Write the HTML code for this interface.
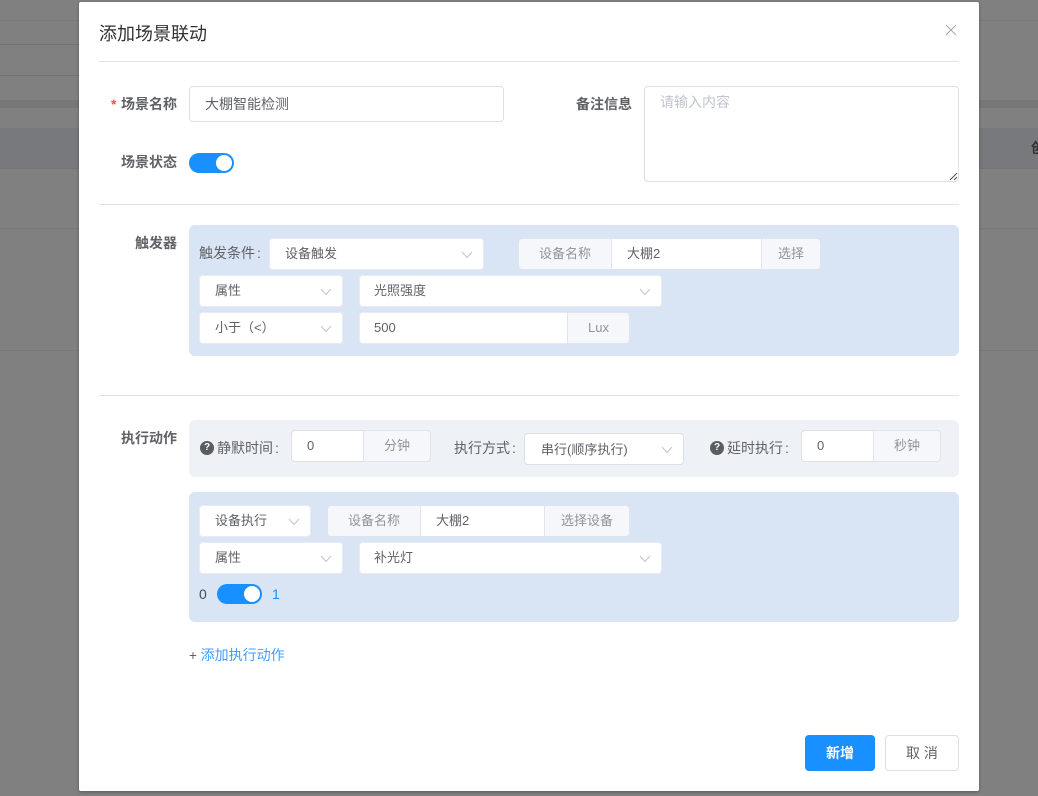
<!DOCTYPE html>
<html lang="zh-CN"><head><meta charset="utf-8"><title>添加场景联动</title>
<style>
html,body{margin:0;padding:0;width:1038px;height:796px;overflow:hidden;background:#808080}
body{position:relative;font:14px/20px "Liberation Sans","Noto Sans CJK SC",sans-serif;color:#606266}
.a,.bg{position:absolute}
.t{position:absolute;white-space:nowrap;line-height:20px;height:20px}
.t u{text-decoration:none;margin-left:2px}
.b{font-weight:700;color:#606266;text-align:right}
.box{position:absolute;box-sizing:border-box;background:#fff;border-radius:4px;font-size:13px;box-shadow:inset 0 0 0 1px #e8ebf2}
.bd{border:1px solid #dcdfe6;box-shadow:none}
.ap{position:absolute;box-sizing:border-box;background:#f5f7fa;color:#909399;text-align:center;line-height:30px;height:32px;border:1px solid #dfe4ed;font-size:13px}
.in{position:absolute;box-sizing:border-box;background:#fff;height:32px;line-height:30px;border-top:1px solid #dfe4ed;border-bottom:1px solid #dfe4ed;color:#606266;padding-left:15px;font-size:13px}
.blue{position:absolute;left:189px;width:770px;background:#d9e4f5;border-radius:6px}
.hr{position:absolute;left:99px;width:860px;height:1px;background:#e2e2e6}
.sw{position:absolute;width:45px;height:20px;border-radius:10px;background:#1890ff}
.sw i{position:absolute;left:27px;top:2px;width:16px;height:16px;border-radius:50%;background:#fff}
svg.ar{position:absolute;width:12px;height:8px}
.q{position:absolute;width:14px;height:14px;border-radius:50%;background:#5a5c60;color:#fff;font:700 10px/14px "Liberation Sans",sans-serif;text-align:center}
</style></head><body>
<div class="bg" style="left:0;top:20px;width:1038px;height:1px;background:#787880"></div>
<div class="bg" style="left:0;top:44px;width:80px;height:1px;background:#717171"></div>
<div class="bg" style="left:0;top:75px;width:80px;height:1px;background:#717171"></div>
<div class="bg" style="left:0;top:100px;width:1038px;height:8px;background:#777778"></div>
<div class="bg" style="left:0;top:128px;width:1038px;height:40px;background:#77797c"></div>
<div class="bg" style="left:0;top:168px;width:1038px;height:1px;background:#737478"></div>
<div class="bg" style="left:0;top:228px;width:1038px;height:1px;background:#76767e"></div>
<div class="bg" style="left:0;top:350px;width:1038px;height:1px;background:#797979"></div>
<div class="t" style="left:1031px;top:138px;color:#333;font-weight:700">创</div>

<div class="a" style="left:79px;top:2px;width:900px;height:789px;background:#fff;border-radius:2px;box-shadow:0 1px 3px rgba(0,0,0,.3)"></div>

<div class="t" style="left:99px;top:21px;font-size:18px;line-height:26px;height:26px;color:#303133">添加场景联动</div>
<svg class="a" style="left:945px;top:24px" width="12" height="12" viewBox="0 0 12 12"><path d="M1 1L11 11M11 1L1 11" stroke="#a4a7ad" stroke-width="1" fill="none"/></svg>
<div class="hr" style="top:61px"></div>

<div class="t" style="left:111px;top:94px;color:#ff4d4f;font-size:14px;font-weight:700">*</div>
<div class="t b" style="left:121px;top:94px;width:56px">场景名称</div>
<div class="box bd" style="left:189px;top:86px;width:315px;height:36px;line-height:34px;padding-left:15px;font-size:14px">大棚智能检测</div>
<div class="t b" style="left:121px;top:152px;width:56px">场景状态</div>
<div class="sw" style="left:189px;top:153px"><i></i></div>

<div class="t b" style="left:576px;top:94px;width:56px">备注信息</div>
<div class="box bd" style="left:644px;top:86px;width:315px;height:96px;padding:5px 15px;color:#c0c4cc;line-height:21px;font-size:14px">请输入内容</div>
<svg class="a" style="left:949px;top:172px" width="9" height="9" viewBox="0 0 9 9"><path d="M1 8L8 1M5 8L8 5" stroke="#555" stroke-width="1" fill="none"/></svg>
<div class="hr" style="top:204px"></div>

<div class="t b" style="left:121px;top:233px;width:56px">触发器</div>
<div class="blue" style="top:225px;height:131px"></div>
<div class="t" style="left:199px;top:243px">触发条件<u>:</u></div>
<div class="box" style="left:269px;top:238px;width:215px;height:32px;line-height:32px;padding-left:16px">设备触发</div>
<svg class="ar" style="left:461px;top:251px" viewBox="0 0 12 8"><path d="M1 1L6 6.5L11 1" stroke="#c0c4cc" fill="none"/></svg>
<div class="ap" style="left:518px;top:238px;width:94px;border-radius:4px 0 0 4px">设备名称</div>
<div class="in" style="left:612px;top:238px;width:150px">大棚2</div>
<div class="ap" style="left:761px;top:238px;width:60px;border-radius:0 4px 4px 0">选择</div>

<div class="box" style="left:199px;top:275px;width:144px;height:32px;line-height:32px;padding-left:16px">属性</div>
<svg class="ar" style="left:320px;top:288px" viewBox="0 0 12 8"><path d="M1 1L6 6.5L11 1" stroke="#c0c4cc" fill="none"/></svg>
<div class="box" style="left:359px;top:275px;width:303px;height:32px;line-height:32px;padding-left:15px">光照强度</div>
<svg class="ar" style="left:639px;top:288px" viewBox="0 0 12 8"><path d="M1 1L6 6.5L11 1" stroke="#c0c4cc" fill="none"/></svg>

<div class="box" style="left:199px;top:312px;width:144px;height:32px;line-height:32px;padding-left:16px">小于（&lt;）</div>
<svg class="ar" style="left:320px;top:325px" viewBox="0 0 12 8"><path d="M1 1L6 6.5L11 1" stroke="#c0c4cc" fill="none"/></svg>
<div class="box" style="left:359px;top:312px;width:209px;height:32px;line-height:32px;padding-left:15px;border-radius:4px 0 0 4px">500</div>
<div class="ap" style="left:567px;top:312px;width:63px;border-radius:0 4px 4px 0">Lux</div>

<div class="hr" style="top:395px"></div>

<div class="t b" style="left:121px;top:428px;width:56px">执行动作</div>
<div class="a" style="left:189px;top:420px;width:770px;height:57px;background:#eef2f7;border-radius:6px"></div>
<div class="q" style="left:200px;top:441px">?</div>
<div class="t" style="left:217px;top:438px">静默时间<u>:</u></div>
<div class="box bd" style="left:291px;top:430px;width:73px;height:32px;line-height:30px;padding-left:15px;border-radius:4px 0 0 4px">0</div>
<div class="ap" style="left:363px;top:430px;width:68px;border-radius:0 4px 4px 0">分钟</div>
<div class="t" style="left:454px;top:438px">执行方式<u>:</u></div>
<div class="box bd" style="left:524px;top:433px;width:160px;height:32px;line-height:32px;padding-left:16px">串行(顺序执行)</div>
<svg class="ar" style="left:661px;top:446px" viewBox="0 0 12 8"><path d="M1 1L6 6.5L11 1" stroke="#c0c4cc" fill="none"/></svg>
<div class="q" style="left:710px;top:441px">?</div>
<div class="t" style="left:727px;top:438px">延时执行<u>:</u></div>
<div class="box bd" style="left:801px;top:430px;width:73px;height:32px;line-height:30px;padding-left:15px;border-radius:4px 0 0 4px">0</div>
<div class="ap" style="left:873px;top:430px;width:68px;border-radius:0 4px 4px 0">秒钟</div>

<div class="blue" style="top:492px;height:130px"></div>
<div class="box" style="left:199px;top:505px;width:112px;height:32px;line-height:32px;padding-left:16px">设备执行</div>
<svg class="ar" style="left:288px;top:518px" viewBox="0 0 12 8"><path d="M1 1L6 6.5L11 1" stroke="#c0c4cc" fill="none"/></svg>
<div class="ap" style="left:327px;top:505px;width:94px;border-radius:4px 0 0 4px">设备名称</div>
<div class="in" style="left:421px;top:505px;width:124px">大棚2</div>
<div class="ap" style="left:544px;top:505px;width:86px;border-radius:0 4px 4px 0">选择设备</div>

<div class="box" style="left:199px;top:542px;width:144px;height:32px;line-height:32px;padding-left:16px">属性</div>
<svg class="ar" style="left:320px;top:555px" viewBox="0 0 12 8"><path d="M1 1L6 6.5L11 1" stroke="#c0c4cc" fill="none"/></svg>
<div class="box" style="left:359px;top:542px;width:303px;height:32px;line-height:32px;padding-left:15px">补光灯</div>
<svg class="ar" style="left:639px;top:555px" viewBox="0 0 12 8"><path d="M1 1L6 6.5L11 1" stroke="#c0c4cc" fill="none"/></svg>

<div class="t" style="left:199px;top:584px;color:#4a4c50">0</div>
<div class="sw" style="left:217px;top:584px"><i></i></div>
<div class="t" style="left:272px;top:584px;color:#1890ff">1</div>

<div class="t" style="left:189px;top:645px;font-size:13.5px"><span style="color:#606266">+ </span><span style="color:#409eff;font-size:14px">添加执行动作</span></div>

<div class="box" style="left:805px;top:735px;width:70px;height:36px;background:#1890ff;color:#fff;text-align:center;line-height:36px;font-weight:700;font-size:14px;box-shadow:none">新增</div>
<div class="box bd" style="left:885px;top:735px;width:74px;height:36px;text-align:center;line-height:34px;font-size:14px">取 消</div>
</body></html>
